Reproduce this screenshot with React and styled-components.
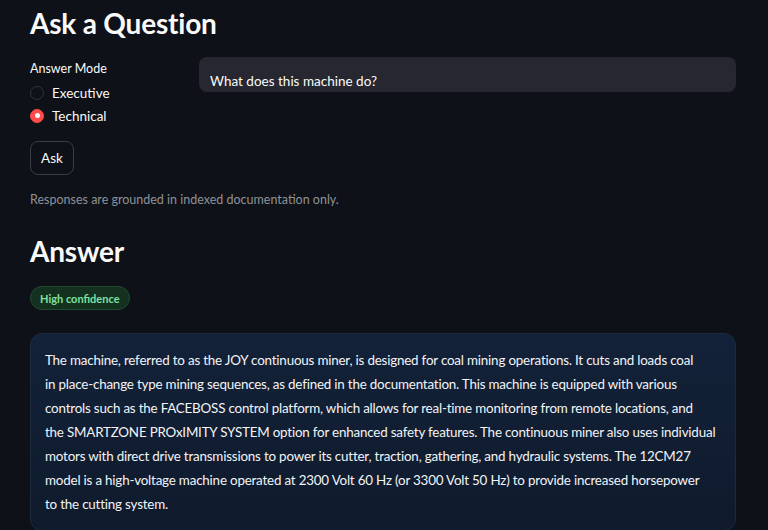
import React, { useState } from "react";
import styled, { createGlobalStyle } from "styled-components";

const Global = createGlobalStyle`
  html, body {
    margin: 0;
    padding: 0;
    background: #0e1117;
  }
  body {
    font-family: Lato, "Noto Sans", sans-serif;
    color: #fafafa;
  }
`;

const Page = styled.div`
  width: 768px;
  height: 530px;
  overflow: hidden;
  box-sizing: border-box;
  padding: 5px 32px 0 30px;
  background: #0e1117;
`;

const Heading = styled.h2`
  margin: ${(p) => p.$mt || 0}px 0 0 0;
  font-size: 28px;
  line-height: 36px;
  font-weight: 700;
  letter-spacing: -0.2px;
  color: #fafafa;
`;

const Row = styled.div`
  display: flex;
  gap: 16px;
  margin-top: 16px;
`;

const LeftCol = styled.div`
  width: 153px;
  flex: none;
`;

const RightCol = styled.div`
  flex: 1;
`;

const Label = styled.div`
  font-size: 12.5px;
  line-height: 18px;
  margin-top: 3px;
  color: #fafafa;
`;

const RadioGroup = styled.div`
  display: flex;
  flex-direction: column;
  gap: 4px;
  margin-top: 5px;
`;

const RadioItem = styled.label`
  display: flex;
  align-items: center;
  gap: 8px;
  height: 19px;
  font-size: 13.5px;
  cursor: pointer;
`;

const Dot = styled.span`
  width: 14px;
  height: 14px;
  border-radius: 50%;
  box-sizing: border-box;
  flex: none;
  background: ${(p) => (p.$on ? "#ff4b4b" : "#0e1117")};
  border: 1px solid ${(p) => (p.$on ? "#ff4b4b" : "#31333f")};
  display: flex;
  align-items: center;
  justify-content: center;
  &::after {
    content: "";
    width: 5px;
    height: 5px;
    border-radius: 50%;
    background: #fff;
    display: ${(p) => (p.$on ? "block" : "none")};
  }
`;

const Input = styled.div`
  height: 35px;
  box-sizing: border-box;
  background: #262730;
  border-radius: 8px;
  padding: 15px 11px 0;
  font-size: 13.5px;
  line-height: 18px;
  color: #fafafa;
  overflow: hidden;
`;

const Button = styled.button`
  display: block;
  margin-top: 16px;
  height: 34px;
  padding: 0 10px;
  border-radius: 8px;
  border: 1px solid #3a3c46;
  background: #0e1117;
  color: #fafafa;
  font-family: inherit;
  font-size: 13.5px;
`;

const Caption = styled.div`
  margin-top: 16px;
  font-size: 12.5px;
  line-height: 18px;
  color: #8f9199;
`;

const Badge = styled.span`
  display: inline-flex;
  align-items: center;
  margin-top: 17px;
  height: 24px;
  box-sizing: border-box;
  padding: 0 9px;
  border-radius: 12px;
  background: #14301f;
  border: 1px solid #1f4a30;
  color: #7fe0a0;
  font-size: 11px;
  font-weight: 700;
`;

const Card = styled.div`
  margin-top: 23px;
  box-sizing: border-box;
  padding: 14px 12px 14px 14px;
  border-radius: 12px;
  border: 1px solid #1c2a40;
  background: linear-gradient(180deg, #132239 0%, #0f1a2c 100%);
  font-size: 13.4px;
  line-height: 24px;
  letter-spacing: -0.2px;
  color: #f2f4f7;
`;

const Line = styled.span`
  display: block;
  white-space: nowrap;
`;

const answerLines = [
  "The machine, referred to as the JOY continuous miner, is designed for coal mining operations. It cuts and loads coal",
  "in place-change type mining sequences, as defined in the documentation. This machine is equipped with various",
  "controls such as the FACEBOSS control platform, which allows for real-time monitoring from remote locations, and",
  "the SMARTZONE PROxIMITY SYSTEM option for enhanced safety features. The continuous miner also uses individual",
  "motors with direct drive transmissions to power its cutter, traction, gathering, and hydraulic systems. The 12CM27",
  "model is a high-voltage machine operated at 2300 Volt 60 Hz (or 3300 Volt 50 Hz) to provide increased horsepower",
  "to the cutting system.",
];

export default function App() {
  const [mode, setMode] = useState("Technical");
  return (
    <Page>
      <Global />
      <Heading>Ask a Question</Heading>
      <Row>
        <LeftCol>
          <Label>Answer Mode</Label>
          <RadioGroup>
            {["Executive", "Technical"].map((m) => (
              <RadioItem key={m} onClick={() => setMode(m)}>
                <Dot $on={mode === m} />
                {m}
              </RadioItem>
            ))}
          </RadioGroup>
        </LeftCol>
        <RightCol>
          <Input>What does this machine do?</Input>
        </RightCol>
      </Row>
      <Button>Ask</Button>
      <Caption>Responses are grounded in indexed documentation only.</Caption>
      <Heading $mt={24}>Answer</Heading>
      <Badge>High confidence</Badge>
      <Card>
        {answerLines.map((l, i) => (
          <Line key={i}>{l}</Line>
        ))}
      </Card>
    </Page>
  );
}
